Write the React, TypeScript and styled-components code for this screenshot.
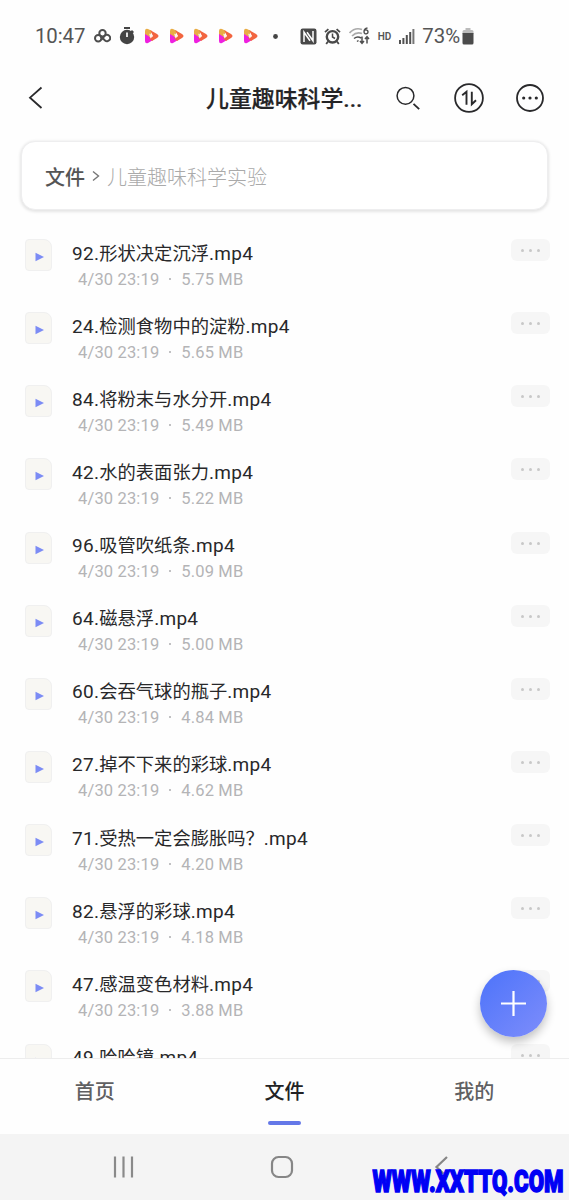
import React from "react";
import styled, { createGlobalStyle } from "styled-components";

const GlobalStyle = createGlobalStyle`
  * { box-sizing: border-box; }
  body { margin: 0; background: #fefefe; }
`;

const Screen = styled.div`
  position: relative;
  display: flex;
  flex-direction: column;
  width: 569px;
  height: 1200px;
  overflow: hidden;
  background: #fefefe;
  color: #242426;
  font-family: Roboto, "Noto Sans CJK SC", sans-serif;
`;

const StatusBar = styled.div`
  display: flex;
  align-items: center;
  flex: none;
  height: 72px;
  padding-left: 35px;
  color: #555;
`;

const StatusItem = styled.div<{ $w: number; $gap?: number; $size?: number; $weight?: number; $spacing?: number }>`
  display: flex;
  flex: none;
  align-items: center;
  width: ${(p) => p.$w}px;
  margin-left: ${(p) => p.$gap ?? 0}px;
  font-size: ${(p) => p.$size ?? 20}px;
  font-weight: ${(p) => p.$weight ?? 400};
  letter-spacing: ${(p) => p.$spacing ?? 0}px;
  white-space: nowrap;
  svg { display: block; flex: none; }
`;

const Header = styled.header`
  display: flex;
  align-items: center;
  flex: none;
  height: 52px;
  padding: 0 24px 0 28px;
`;

const IconButton = styled.button<{ $gap?: number; $w?: number }>`
  display: flex;
  flex: none;
  align-items: center;
  justify-content: center;
  width: ${(p) => p.$w ?? 32}px;
  height: 32px;
  margin: 0 0 0 ${(p) => p.$gap ?? 0}px;
  padding: 0;
  border: 0;
  background: none;
  color: #29292b;
  svg { display: block; }
`;

const Title = styled.h1`
  flex: none;
  width: 158px;
  margin: 0 0 0 162px;
  padding-top: 3px;
  font-size: 22.9px;
  line-height: 34px;
  font-weight: 500;
  -webkit-text-stroke: 0.2px currentColor;
  white-space: nowrap;
`;

const Breadcrumb = styled.nav`
  display: flex;
  align-items: center;
  flex: none;
  height: 69px;
  margin: 17px 21px 0;
  padding: 4px 24px 0;
  border: 1px solid #eeeeef;
  border-radius: 14px;
  background: #fff;
  box-shadow: 0 1px 3px 1px rgba(0, 0, 0, 0.1);
  font-size: 20px;
  line-height: 30px;
  svg { margin: -3px 7px 0 7px; }
`;

const CrumbRoot = styled.span`
  color: #555;
  font-weight: 500;
  margin-left: -1px;
`;

const CrumbCurrent = styled.span`
  color: #aaa;
  font-weight: 300;
`;

const FileList = styled.main`
  flex: none;
  height: 848px;
  overflow: hidden;
  padding-top: 7px;
`;

const FileRow = styled.article`
  display: flex;
  height: 73.15px;
  padding: 0 19px 0 25px;
`;

const FileIcon = styled.div`
  display: flex;
  flex: none;
  align-items: center;
  justify-content: center;
  width: 27px;
  height: 32px;
  margin-top: 22px;
  padding: 4px 0 0 2px;
  border: 1px solid #f0f0f0;
  border-radius: 4px 8px 4px 4px;
  background: #f8f7f3;
`;

const FileText = styled.div`
  flex: 1;
  margin-left: 20px;
  padding-top: 22.5px;
  white-space: nowrap;
`;

const FileName = styled.div`
  height: 28px;
  font-size: 18.3px;
  line-height: 28px;
  color: #28282a;
`;

const Latin = styled.span`
  font-size: 19px;
  letter-spacing: 0.3px;
`;

const FileMeta = styled.div`
  padding-left: 6px;
  font-size: 16.5px;
  line-height: 24px;
  color: #b4b4b6;
  letter-spacing: 0.15px;
`;

const Dot = styled.span`
  display: inline-block;
  width: 2px;
  height: 2px;
  margin: 0 10px 5px 10px;
  border-radius: 1px;
  background: #adadaf;
`;

const RowMenu = styled.button`
  display: flex;
  flex: none;
  align-items: center;
  justify-content: center;
  gap: 5px;
  width: 39px;
  height: 22px;
  margin: 22px 0 0;
  padding: 1px 0 0;
  border: 0;
  border-radius: 6px;
  background: #f6f6f6;
  i { width: 3px; height: 3px; border-radius: 50%; background: #c8c8c8; }
`;

const AddButton = styled.button`
  position: absolute;
  left: 480px;
  top: 969.5px;
  display: flex;
  align-items: center;
  justify-content: center;
  width: 67px;
  height: 67px;
  padding: 0;
  border: 0;
  border-radius: 50%;
  background: linear-gradient(135deg, #4c73fa, #7e8dfb);
  box-shadow: 0 5px 10px rgba(0, 0, 0, 0.24);
`;

const TabBar = styled.nav`
  display: flex;
  flex: none;
  height: 76px;
  border-top: 1px solid #ededed;
  background: #fefefe;
`;

const Tab = styled.a<{ $active?: boolean }>`
  display: flex;
  flex: 1;
  flex-direction: column;
  align-items: center;
  padding-top: 18px;
  font-size: 20px;
  line-height: 30px;
  font-weight: 500;
  color: ${(p) => (p.$active ? "#222224" : "#606062")};
  &::after {
    content: "";
    width: 33px;
    height: 4px;
    margin-top: 14px;
    border-radius: 2px;
    background: ${(p) => (p.$active ? "#6478e8" : "transparent")};
  }
`;

const SystemNav = styled.div`
  display: flex;
  flex: 1;
  align-items: center;
  padding-left: 112px;
  background: #f4f4f4;
  svg:nth-child(2) { margin-left: 135px; }
  svg:nth-child(3) { margin-left: 139px; }
`;

const Watermark = styled.div`
  position: absolute;
  left: 372px;
  top: 1160px;
  svg { display: block; }
`;

const files: [string, string, string][] = [
  ["92.", "形状决定沉浮", "5.75 MB"],
  ["24.", "检测食物中的淀粉", "5.65 MB"],
  ["84.", "将粉末与水分开", "5.49 MB"],
  ["42.", "水的表面张力", "5.22 MB"],
  ["96.", "吸管吹纸条", "5.09 MB"],
  ["64.", "磁悬浮", "5.00 MB"],
  ["60.", "会吞气球的瓶子", "4.84 MB"],
  ["27.", "掉不下来的彩球", "4.62 MB"],
  ["71.", "受热一定会膨胀吗？", "4.20 MB"],
  ["82.", "悬浮的彩球", "4.18 MB"],
  ["47.", "感温变色材料", "3.88 MB"],
  ["49.", "哈哈镜", "3.75 MB"],
];

const PlayLogo = () => (
  <svg width="15" height="16" viewBox="0 0 15 16">
    <path d="M1 3Q1 0 4 1L8 3 5 10 1 13Z" fill="#e9ad45" />
    <path d="M1 6L6 9 9 12 4 15Q1 16 1 13Z" fill="#ee20df" />
    <path d="M6 2L13 6Q16 8 13 10L8 13 5 10 9 8Z" fill="#f2653f" />
    <path d="M5.2 5.5L9 8 6.5 10.6Z" fill="#fff3e8" />
  </svg>
);

export default function App() {
  return (
    <>
      <GlobalStyle />
      <Screen>
        <StatusBar>
          <StatusItem $w={51} $size={20.4} $spacing={-0.1}>10:47</StatusItem>
          <StatusItem $w={17} $gap={8}>
            <svg width="17" height="14" viewBox="0 0 17 14" fill="none" stroke="#4d4d4d" strokeWidth="2">
              <circle cx="8.500" cy="4.300" r="3.200" />
              <circle cx="4.200" cy="9.300" r="3.200" />
              <path d="M6.800 7.200L11 11.500A3.200 3.200 0 1 0 10.400 7.200L7 11" />
            </svg>
          </StatusItem>
          <StatusItem $w={16} $gap={8}>
            <svg width="16" height="18" viewBox="0 0 16 18">
              <path d="M5 0h6v2H5zM13 3l2 2-1.500 1.500-2-2z" fill="#444" />
              <circle cx="8" cy="10" r="7.200" fill="#444" />
              <path d="M8 5.500V10" stroke="#fff" strokeWidth="1.700" />
            </svg>
          </StatusItem>
          {[0, 1, 2, 3, 4].map((n) => (
            <StatusItem key={n} $w={15} $gap={n ? 9.7 : 9}><PlayLogo /></StatusItem>
          ))}
          <StatusItem $w={5} $gap={15}>
            <svg width="5" height="5"><circle cx="2.500" cy="2.500" r="2.400" fill="#444" /></svg>
          </StatusItem>
          <StatusItem $w={17} $gap={22}>
            <svg width="17" height="17" viewBox="0 0 17 17" fill="none">
              <rect x=".5" y=".5" width="16" height="16" rx="2.200" fill="#494949" />
              <path d="M4 14V4.200L10 12.800M13 3V12.800L7 4.200" stroke="#fff" strokeWidth="1.500" />
            </svg>
          </StatusItem>
          <StatusItem $w={17} $gap={7}>
            <svg width="17" height="17" viewBox="0 0 17 17" fill="none" stroke="#494949">
              <circle cx="8.500" cy="8.800" r="5.700" strokeWidth="2.400" />
              <path d="M8.500 5.500V9L11 10.500" strokeWidth="1.500" />
              <path d="M1 4.200L4.400 1.200M16 4.200L12.600 1.200M4 13.500L2.200 16M13 13.500L14.800 16" strokeWidth="1.800" />
            </svg>
          </StatusItem>
          <StatusItem $w={21} $gap={8}>
            <svg width="21" height="18" viewBox="0 0 21 18" fill="none">
              <path d="M.5 6Q6 0 13 2.500M3 9Q7.500 4.500 13 6.500" stroke="#aaa" strokeWidth="1.700" />
              <path d="M5 11.500Q8.500 8.700 12 11M8 14.500L9.500 13.500M13 9.500V16M11 14L13 16.300 15 14M18 16.500V10M16 12L18 9.700 20 12" stroke="#505050" strokeWidth="1.500" />
              <path d="M18.500 1Q15 1.500 15 5A2 2 0 1 0 15.200 4" stroke="#505050" strokeWidth="1.400" />
            </svg>
          </StatusItem>
          <StatusItem $w={15} $gap={8} $size={10} $weight={600}>HD</StatusItem>
          <StatusItem $w={16} $gap={6}>
            <svg width="16" height="15" viewBox="0 0 16 15" fill="#515151">
              <path d="M0 11h2v4H0zM3.400 9h2v6h-2zM6.800 6h2v9h-2zM10.200 3h2v12h-2z" />
              <path d="M13.400 0h2v15h-2z" fill="#777" />
            </svg>
          </StatusItem>
          <StatusItem $w={39} $gap={7.5} $size={20.4}>73%</StatusItem>
          <StatusItem $w={12} $gap={1}>
            <svg width="12" height="17" viewBox="0 0 12 17">
              <path d="M3.500 0h5v2H10q1.500 0 1.500 1.500V6H.5V3.500Q.5 2 2 2h1.500z" fill="#bbb" />
              <path d="M.5 5h11v10q0 1.500-1.500 1.500H2Q.5 16.500 .5 15z" fill="#4b4b4b" />
            </svg>
          </StatusItem>
        </StatusBar>

        <Header>
          <IconButton $w={16} aria-label="返回">
            <svg width="16" height="24" viewBox="0 0 16 24" fill="none" stroke="currentColor" strokeWidth="1.800">
              <path d="M13.500 1.500L2 11.700L13.500 22" />
            </svg>
          </IconButton>
          <Title>儿童趣味科学...</Title>
          <IconButton $gap={28}>
            <svg width="26" height="26" viewBox="0 0 26 26" fill="none" stroke="currentColor">
              <circle cx="10.500" cy="10.800" r="8.400" strokeWidth="1.500" />
              <path d="M18.500 18.800L24.200 24.200" strokeWidth="1.800" />
            </svg>
          </IconButton>
          <IconButton $gap={29}>
            <svg width="32" height="32" viewBox="0 0 32 32" fill="none" stroke="currentColor">
              <circle cx="16" cy="16" r="13.900" strokeWidth="1.800" />
              <path d="M9.200 13.200L13.500 9.700V22.700M18.800 9.700V22.200L23 18.200" strokeWidth="1.900" />
            </svg>
          </IconButton>
          <IconButton $gap={29}>
            <svg width="32" height="32" viewBox="0 0 32 32" fill="none" stroke="currentColor">
              <circle cx="16" cy="16" r="13" strokeWidth="1.800" />
              <path d="M9.700 16h.01M16 16h.01M22.300 16h.01" strokeWidth="3.200" strokeLinecap="round" />
            </svg>
          </IconButton>
        </Header>

        <Breadcrumb>
          <CrumbRoot>文件</CrumbRoot>
          <svg width="8" height="12" viewBox="0 0 8 12" fill="none" stroke="#777" strokeWidth="1.400">
            <path d="M1 1.500L6.500 6L1 10.500" />
          </svg>
          <CrumbCurrent>儿童趣味科学实验</CrumbCurrent>
        </Breadcrumb>

        <FileList>
          {files.map(([number, title, size]) => (
            <FileRow key={number}>
              <FileIcon>
                <svg width="10" height="10" viewBox="0 0 10 10">
                  <path d="M.5 .7L9 5L.5 9.300Z" fill="#7c8cf5" />
                </svg>
              </FileIcon>
              <FileText>
                <FileName><Latin>{number}</Latin>{title}<Latin>.mp4</Latin></FileName>
                <FileMeta>4/30 23:19<Dot />{size}</FileMeta>
              </FileText>
              <RowMenu><i /><i /><i /></RowMenu>
            </FileRow>
          ))}
        </FileList>

        <TabBar>
          <Tab>首页</Tab>
          <Tab $active>文件</Tab>
          <Tab>我的</Tab>
        </TabBar>

        <SystemNav>
          <svg width="23" height="22" viewBox="0 0 23 22" stroke="#8a8a8a" strokeWidth="2.200">
            <path d="M3 .5V21.500M11.500 .5V21.500M20 .5V21.500" />
          </svg>
          <svg width="24" height="24" viewBox="0 0 24 24" fill="none" stroke="#868686" strokeWidth="2.200">
            <rect x="2" y="2" width="20" height="20" rx="6.500" />
          </svg>
          <svg width="16" height="24" viewBox="0 0 16 24" fill="none" stroke="#868686" strokeWidth="2.200">
            <path d="M14 2L3.500 12L14 22" />
          </svg>
        </SystemNav>

        <AddButton aria-label="添加">
          <svg width="27" height="27" viewBox="0 0 27 27" stroke="#fff" strokeWidth="2.200">
            <path d="M1 13.500H26M13.500 1V26" />
          </svg>
        </AddButton>

        <Watermark>
          <svg width="197" height="40" viewBox="0 0 197 40">
            <text
              x="0.500"
              y="31.500"
              textLength="191"
              lengthAdjust="spacingAndGlyphs"
              fontFamily="Roboto, sans-serif"
              fontWeight="900"
              fontSize="32"
              fill="#0000f5"
              stroke="#0000f5"
              strokeWidth="1.600"
            >
              WWW.XXTTQ.COM
            </text>
          </svg>
        </Watermark>
      </Screen>
    </>
  );
}
